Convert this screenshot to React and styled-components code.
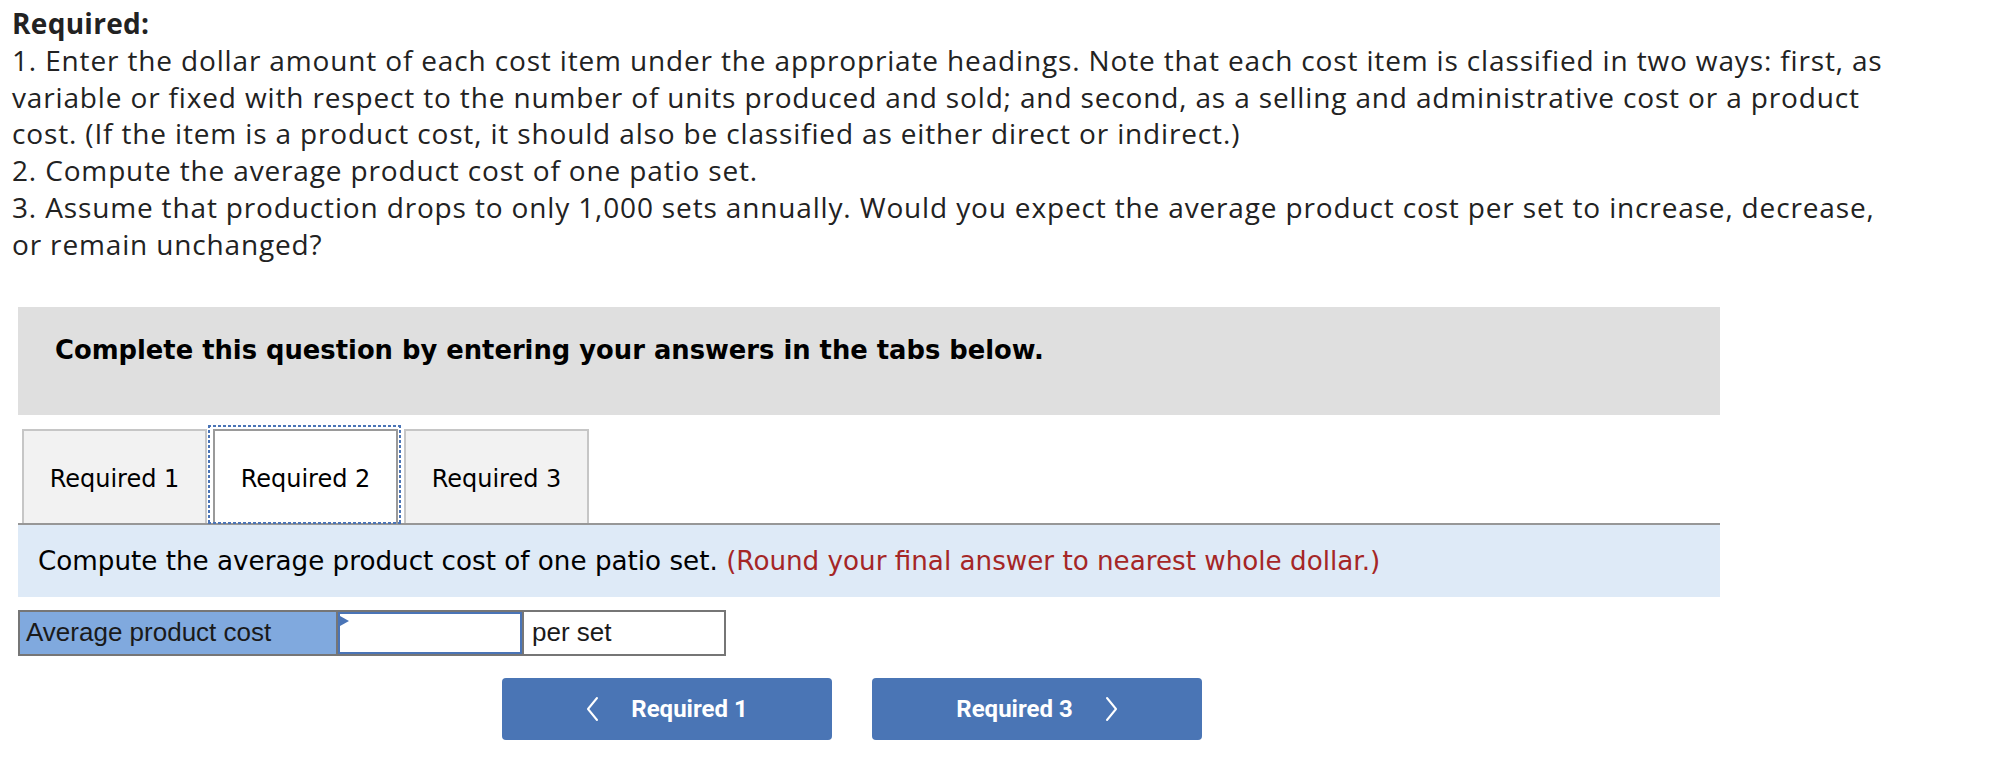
import React from "react";
import styled, { createGlobalStyle } from "styled-components";

const GlobalStyle = createGlobalStyle`
  html, body {
    margin: 0;
    padding: 0;
    background: #ffffff;
  }
  body {
    font-family: "Open Sans", "Liberation Sans", sans-serif;
    color: #222222;
  }
`;

const Page = styled.div`
  width: 2004px;
  padding-top: 5px;
`;

const Instructions = styled.div`
  margin-left: 12px;
  font-family: "Open Sans", sans-serif;
  font-size: 28px;
  letter-spacing: 0.85px;
  line-height: 36.8px;
  color: #222222;
  white-space: nowrap;
`;

const Heading = styled.div`
  font-weight: 700;
  letter-spacing: 0.3px;
`;

const Panel = styled.div`
  margin: 44px 0 0 18px;
  width: 1702px;
`;

const Banner = styled.div`
  height: 108px;
  box-sizing: border-box;
  background: #dfdfdf;
  padding: 28px 0 0 37px;
  font-family: "DejaVu Sans", Verdana, sans-serif;
  font-weight: 700;
  font-size: 25.8px;
  color: #000000;
`;

const TabRow = styled.div`
  display: flex;
  gap: 6px;
  margin-top: 14px;
  padding-left: 4px;
  border-bottom: 2px solid #979797;
`;

const dots = (dir) =>
  `repeating-linear-gradient(${dir}, #4a74b6 0 3px, transparent 3px 5px)`;

const Tab = styled.div`
  width: 185px;
  height: 94px;
  box-sizing: border-box;
  display: flex;
  align-items: center;
  justify-content: center;
  padding-top: 5px;
  font-family: "DejaVu Sans", Verdana, sans-serif;
  font-size: 24px;
  color: #000000;
  background: ${(p) => (p.$active ? "#ffffff" : "#f2f2f2")};
  border: 2px solid ${(p) => (p.$active ? "#9a9a9a" : "#c6c6c6")};
  border-bottom: none;
  margin-bottom: ${(p) => (p.$active ? "-2px" : "0")};
  position: relative;

  &::after {
    content: "";
    display: ${(p) => (p.$active ? "block" : "none")};
    position: absolute;
    top: -6px;
    left: -7px;
    right: -5px;
    bottom: -1px;
    background:
      ${dots("90deg")} top left / 100% 2px no-repeat,
      ${dots("90deg")} bottom left / 100% 2px no-repeat,
      ${dots("180deg")} top left / 2px 100% no-repeat,
      ${dots("180deg")} top right / 2px 100% no-repeat;
    pointer-events: none;
  }
`;

const Prompt = styled.div`
  height: 72px;
  box-sizing: border-box;
  background: #deeaf7;
  padding: 21px 0 0 20px;
  font-family: "DejaVu Sans", Verdana, sans-serif;
  font-size: 26.2px;
  color: #000000;
`;

const Hint = styled.span`
  color: #a52626;
`;

const AnswerTable = styled.table`
  margin-top: 13px;
  border-collapse: collapse;
  font-family: "Liberation Sans", Arial, sans-serif;
  font-size: 26px;
  color: #1a1a1a;
`;

const Cell = styled.td`
  height: 42px;
  padding: 0;
  border: 2px solid #767676;
  background: ${(p) => (p.$blue ? "#80a9de" : "#ffffff")};
  width: ${(p) => p.$w}px;
  padding-left: ${(p) => p.$pad || 0}px;
  vertical-align: middle;
`;

const InputBox = styled.div`
  position: relative;
  height: 42px;
  box-sizing: border-box;
  border: 2px solid #4a74b6;
  background: #ffffff;
`;

const Marker = styled.span`
  position: absolute;
  left: 0;
  top: 2px;
  width: 0;
  height: 0;
  border-top: 5px solid transparent;
  border-bottom: 5px solid transparent;
  border-left: 9px solid #4a74b6;
`;

const NavRow = styled.div`
  display: flex;
  gap: 40px;
  margin-top: 22px;
  padding-left: 484px;
`;

const NavButton = styled.button`
  width: 330px;
  height: 62px;
  border: none;
  border-radius: 4px;
  background: #4a75b5;
  color: #ffffff;
  display: flex;
  align-items: center;
  justify-content: center;
  gap: 32px;
  font-family: "Roboto", sans-serif;
  font-weight: 700;
  font-size: 24px;
  letter-spacing: 0px;
  cursor: pointer;
`;

const Chevron = ({ dir }) => (
  <svg width="13" height="26" viewBox="0 0 13 26" fill="none">
    <polyline
      points={dir === "left" ? "11,2 2,13 11,24" : "2,2 11,13 2,24"}
      stroke="#ffffff"
      strokeWidth="2"
      strokeLinecap="round"
      strokeLinejoin="round"
    />
  </svg>
);

export default function App() {
  return (
    <Page>
      <GlobalStyle />
      <Instructions>
        <Heading>Required:</Heading>
        1. Enter the dollar amount of each cost item under the appropriate headings. Note that each cost item is classified in two ways: first, as
        <br />
        variable or fixed with respect to the number of units produced and sold; and second, as a selling and administrative cost or a product
        <br />
        cost. (If the item is a product cost, it should also be classified as either direct or indirect.)
        <br />
        2. Compute the average product cost of one patio set.
        <br />
        3. Assume that production drops to only 1,000 sets annually. Would you expect the average product cost per set to increase, decrease,
        <br />
        or remain unchanged?
      </Instructions>

      <Panel>
        <Banner>Complete this question by entering your answers in the tabs below.</Banner>

        <TabRow>
          <Tab>Required 1</Tab>
          <Tab $active>Required 2</Tab>
          <Tab>Required 3</Tab>
        </TabRow>

        <Prompt>
          Compute the average product cost of one patio set.{" "}
          <Hint>(Round your final answer to nearest whole dollar.)</Hint>
        </Prompt>

        <AnswerTable>
          <tbody>
            <tr>
              <Cell $blue $w={310} $pad={6}>Average product cost</Cell>
              <Cell $w={184}>
                <InputBox>
                  <Marker />
                </InputBox>
              </Cell>
              <Cell $w={192} $pad={8}>per set</Cell>
            </tr>
          </tbody>
        </AnswerTable>

        <NavRow>
          <NavButton>
            <Chevron dir="left" />
            Required 1
          </NavButton>
          <NavButton>
            Required 3
            <Chevron dir="right" />
          </NavButton>
        </NavRow>
      </Panel>
    </Page>
  );
}
